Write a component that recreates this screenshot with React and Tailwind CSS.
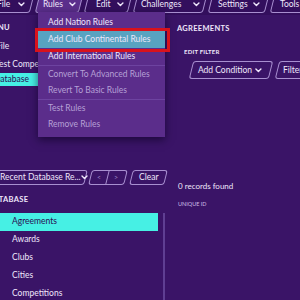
import React from 'react';

const Chevron = ({ className = '' }) => (
  <svg width="7" height="5" viewBox="0 0 7 5" className={`shrink-0 ${className}`}>
    <polyline points="1,1 3.5,3.5 6,1" fill="none" stroke="currentColor" strokeWidth="1.4" strokeLinecap="round" strokeLinejoin="round" />
  </svg>
);

// slanted outline button, FM style
const SlantButton = ({ width, label, active, chevron = true, className = '', pad = 'pl-[5px] pr-[4px]' }) => (
  <div
    className={`h-full -skew-x-[14deg] rounded-[3px] border border-[#a88fd0] flex items-center shrink-0 ${active ? 'bg-[#5b2e8c]' : ''} ${className}`}
    style={{ width }}
  >
    <div className={`skew-x-[14deg] flex items-center justify-between w-full ${pad} text-[8.5px] text-[#efe7fb] whitespace-nowrap`}>
      <span>{label}</span>
      {chevron && <Chevron />}
    </div>
  </div>
);

const menuItems = [
  { label: 'Add Nation Rules' },
  { label: 'Add Club Continental Rules', hover: true },
  { label: 'Add International Rules' },
  { label: 'Convert To Advanced Rules', disabled: true, sep: true },
  { label: 'Revert To Basic Rules', disabled: true },
  { label: 'Test Rules', disabled: true, sep: true },
  { label: 'Remove Rules', disabled: true },
];

const dbItems = ['Agreements', 'Awards', 'Clubs', 'Cities', 'Competitions', 'Continents'];

export default function App() {
  return (
    <div className="relative w-[300px] h-[300px] overflow-hidden bg-[#3a1467] text-[#efe7fb] whitespace-nowrap" style={{ fontFamily: 'Lato, "Noto Sans", sans-serif' }}>
      {/* Top toolbar */}
      <div className="h-[15px] bg-[#330f5d] flex items-end">
        <div className="flex gap-[5px] h-[18px] -ml-[30px] mb-[2px]">
          <SlantButton width={62} label="File" pad="pl-[26px] pr-[6px]" />
          <SlantButton width={44} label="Rules" active />
          <SlantButton width={44} label="Edit" pad="pl-[9px] pr-[5px]" />
          <SlantButton width={70} label="Challenges" />
          <SlantButton width={57} label="Settings" pad="pl-[7px] pr-[6px]" />
          <SlantButton width={60} label="Tools" pad="pl-[7px] pr-[6px]" />
        </div>
      </div>

      <div className="flex h-[285px]">
        {/* Left column */}
        <div className="w-[170px] flex flex-col shrink-0">
          <div className="pt-[9px] -ml-[14px] text-[7.5px] font-bold tracking-[0.3px] leading-[8px]">MENU</div>
          <div className="mt-[9px] -ml-[4px] text-[8.5px] leading-[10px]">File</div>
          <div className="mt-[8px] -ml-[5px] text-[8.5px] leading-[10px]">Test Competitions</div>
          <div className="mt-[4px] h-[15px] w-[160px] bg-[#46f0e4] text-[#2a0a52] text-[8.5px] flex items-center">
            <span className="-ml-[6px]">Database</span>
          </div>

          {/* recent / nav toolbar */}
          <div className="mt-[84px] flex items-center h-[16px] gap-[4px]">
            <div className="w-[94px] h-full -ml-[8px] -skew-x-[14deg] rounded-[3px] border border-[#a88fd0] flex items-center shrink-0">
              <div className="skew-x-[14deg] flex items-center justify-between w-full pl-[7px] pr-[7px] text-[8.5px]">
                <span>Recent Database Re...</span>
                <Chevron />
              </div>
            </div>
            <div className="w-[36px] h-full -skew-x-[14deg] rounded-[3px] border border-[#a88fd0] flex shrink-0">
              <div className="w-1/2 border-r border-[#a88fd0] flex items-center justify-center">
                <span className="skew-x-[14deg] text-[7px] text-[#9f88c4]">&lt;</span>
              </div>
              <div className="w-1/2 flex items-center justify-center">
                <span className="skew-x-[14deg] text-[7px] text-[#9f88c4]">&gt;</span>
              </div>
            </div>
            <div className="ml-[1px] w-[35px] h-full -skew-x-[14deg] rounded-[3px] border border-[#a88fd0] flex items-center justify-center shrink-0">
              <span className="skew-x-[14deg] text-[8.5px]">Clear</span>
            </div>
          </div>

          <div className="mt-[11px] -ml-[12px] text-[7.5px] font-bold tracking-[0.3px] leading-[8px]">DATABASE</div>

          <div className="mt-[9px] flex flex-1">
            <div className="w-[158px] flex flex-col">
              {dbItems.map((d, i) => (
                <div
                  key={d}
                  className={`h-[18px] shrink-0 flex items-center pl-[12px] text-[8.5px] ${i === 0 ? 'bg-[#46f0e4] text-[#2a0a52]' : ''}`}
                >
                  {d}
                </div>
              ))}
            </div>
            <div className="ml-[5px] w-[2px] bg-[#5f3f92]" />
          </div>
        </div>

        {/* Right column */}
        <div className="flex-1 flex flex-col pl-[7px]">
          <div className="pt-[10px] text-[7.5px] font-bold tracking-[0.3px] leading-[8px]">AGREEMENTS</div>
          <div className="mt-[15px] ml-[7px] text-[6px] font-bold tracking-[0.2px] leading-[7px]">EDIT FILTER</div>
          <div className="mt-[6px] ml-[14px] flex h-[18px] gap-[6px]">
            <SlantButton width={80} label="Add Condition" pad="pl-[6px] pr-[8px]" />
            <SlantButton width={40} label="Filters" chevron={false} />
          </div>
          <div className="mt-[102px] ml-[1px] text-[8px] leading-[10px]">0 records found</div>
          <div className="mt-[10px] ml-[1px] text-[5.5px] text-[#cdbde6] leading-[7px]">UNIQUE ID</div>
        </div>
      </div>

      {/* Rules dropdown (overlay) */}
      <div className="absolute left-[38px] top-[12px] w-[127px] bg-[#5b2d8b] pt-[2px] pb-[4px] shadow-[0_3px_8px_rgba(10,0,30,0.6)]">
        {menuItems.map((m) => (
          <div
            key={m.label}
            className={`h-[17px] flex items-center pl-[10px] text-[8.5px] ${m.sep ? 'border-t border-[#6d43a0]' : ''} ${m.hover ? 'bg-[#58a3c1] text-[#e9f4fa]' : ''} ${m.disabled ? 'text-[#b6a0d6]' : 'text-[#efe7fb]'}`}
          >
            {m.label}
          </div>
        ))}
      </div>

      {/* red annotation box */}
      <div className="absolute left-[35px] top-[28px] w-[135px] h-[24px] border-[3px] border-[#d8121c]" />
    </div>
  );
}
